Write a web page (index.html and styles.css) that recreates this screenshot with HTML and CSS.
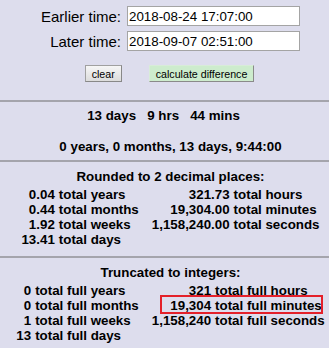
FILE: index.html
```html
<!DOCTYPE html>
<html lang="en">
<head>
    <meta charset="UTF-8">
    <title>Time Difference</title>
    <link rel="stylesheet" href="styles.css">
</head>
<body>
<div class="page">
    <form class="times" onsubmit="return false">
        <label for="t1">Earlier time:</label>
        <input type="text" id="t1" value="2018-08-24 17:07:00">
        <label for="t2">Later time:</label>
        <input type="text" id="t2" value="2018-09-07 02:51:00">
    </form>
    <div class="buttons">
        <button type="button" class="btn">clear</button>
        <button type="button" class="btn calc">calculate difference</button>
    </div>
</div>

<hr>

<div class="page">
    <p class="line first">13 days&nbsp;&nbsp; 9 hrs&nbsp;&nbsp; 44 mins</p>
    <p class="line second">0 years, 0 months, 13 days, 9:44:00</p>
</div>

<hr>

<div class="page">
    <p class="line title">Rounded to 2 decimal places:</p>
    <table class="totals">
        <tr><td class="n">0.04</td><td class="l">total years</td><td class="n">321.73</td><td class="l last">total hours</td></tr>
        <tr><td class="n">0.44</td><td class="l">total months</td><td class="n">19,304.00</td><td class="l last">total minutes</td></tr>
        <tr><td class="n">1.92</td><td class="l">total weeks</td><td class="n">1,158,240.00</td><td class="l last">total seconds</td></tr>
        <tr><td class="n">13.41</td><td class="l">total days</td><td></td><td></td></tr>
    </table>
</div>

<hr>

<div class="page">
    <p class="line title">Truncated to integers:</p>
    <table class="totals">
        <tr><td class="n">0</td><td class="l">total full years</td><td class="n">321</td><td class="l last">total full hours</td></tr>
        <tr><td class="n">0</td><td class="l">total full months</td><td class="n marked">19,304</td><td class="l last">total full minutes</td></tr>
        <tr><td class="n">1</td><td class="l">total full weeks</td><td class="n">1,158,240</td><td class="l last">total full seconds</td></tr>
        <tr><td class="n">13</td><td class="l">total full days</td><td></td><td></td></tr>
    </table>
</div>
</body>
</html>
```

FILE: styles.css
```css
body {
    margin: 0;
    background-color: #dddded;
    font-family: "Liberation Sans", Arial, sans-serif;
    color: #000;
}
.page {
    padding-left: 12px;
}
.times {
    display: grid;
    grid-template-columns: auto 173px;
    justify-content: center;
    align-items: center;
    column-gap: 6px;
    row-gap: 5px;
    margin: 0;
    padding-top: 6px;
}
.times label {
    font-size: 15px;
    text-align: right;
}
.times input {
    box-sizing: border-box;
    width: 173px;
    height: 20px;
    margin: 0;
    padding: 0 1px;
    border: 1px solid #a4a4a4;
    background: #fff;
    font-family: "Liberation Sans", Arial, sans-serif;
    font-size: 13.33px;
    color: #000;
}
.buttons {
    display: flex;
    justify-content: center;
    gap: 27px;
    margin-top: 14px;
    padding-right: 2px;
    padding-bottom: 18px;
}
.btn {
    box-sizing: border-box;
    height: 17px;
    margin: 0;
    padding: 0 6px;
    border: 1px solid #a0a0a0;
    border-right-color: #888;
    border-bottom-color: #888;
    background: linear-gradient(#f6f6f6, #dcdcdc);
    font-family: "Liberation Sans", Arial, sans-serif;
    font-size: 10.67px;
    color: #000;
}
.btn.calc {
    border-color: #d8ecd8 #8a8a8a #8a8a8a #d8ecd8;
    background: #cdeccd;
}
hr {
    height: 0;
    margin: 0;
    border: none;
    border-top: 2px solid #a4a4ac;
}
.line {
    margin: 0;
    text-align: center;
    font-size: 13.33px;
    font-weight: bold;
    line-height: 15px;
}
.line.first {
    padding-top: 6px;
    padding-right: 14px;
}
.line.second {
    padding-top: 16px;
    padding-bottom: 6px;
}
.line.title {
    padding-top: 7px;
    padding-bottom: 3px;
}
.totals {
    margin: 0 auto 9px;
    border-collapse: collapse;
    font-size: 13.33px;
    font-weight: bold;
    line-height: 15px;
}
.totals td {
    padding: 0;
    white-space: nowrap;
}
.totals .n {
    text-align: right;
    padding-right: 4px;
}
.totals .l {
    text-align: left;
    padding-right: 13px;
}
.totals .l.last {
    padding-right: 0;
}
.marked {
    position: relative;
}
.marked::after {
    content: "";
    position: absolute;
    left: 8px;
    top: -3px;
    width: 163px;
    height: 19px;
    box-sizing: border-box;
    border: 2px solid #e4202a;
}
```
